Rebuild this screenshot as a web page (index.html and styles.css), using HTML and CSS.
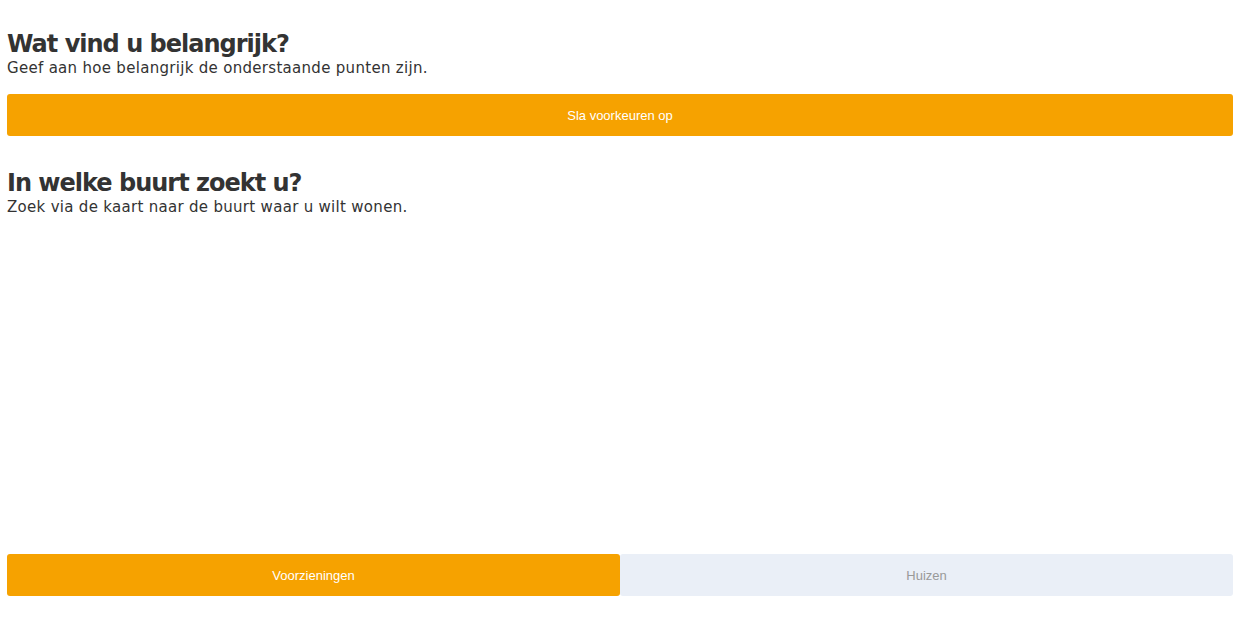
FILE: index.html
```html
<!DOCTYPE html>
<html lang="nl">
<head>
<meta charset="utf-8">
<title>Voorkeuren</title>
<link rel="stylesheet" href="styles.css">
</head>
<body>
<main class="page">
  <section class="block">
    <h1 class="title">Wat vind u belangrijk?</h1>
    <p class="subtitle">Geef aan hoe belangrijk de onderstaande punten zijn.</p>
    <button class="btn btn-primary btn-save">Sla voorkeuren op</button>
  </section>
  <section class="block block-map">
    <h1 class="title">In welke buurt zoekt u?</h1>
    <p class="subtitle">Zoek via de kaart naar de buurt waar u wilt wonen.</p>
    <div class="map"></div>
    <div class="tabs">
      <button class="btn btn-primary tab">Voorzieningen</button>
      <button class="btn btn-muted tab">Huizen</button>
    </div>
  </section>
</main>
</body>
</html>
```
FILE: styles.css
```css
html, body {
  margin: 0;
  padding: 0;
  background: #ffffff;
}
.page {
  padding: 29px 4px 0 7px;
  font-family: "DejaVu Sans", sans-serif;
  color: #333333;
}
.title {
  margin: 0;
  font-size: 24px;
  line-height: 30px;
  font-weight: 700;
  letter-spacing: -1px;
}
.subtitle {
  margin: 0;
  font-size: 15px;
  line-height: 18px;
  letter-spacing: 0.3px;
}
.btn {
  display: block;
  border: 0;
  height: 42px;
  font-family: "Liberation Sans", Arial, sans-serif;
  font-size: 13px;
  cursor: pointer;
}
.btn-primary {
  background: #f6a200;
  color: #ffffff;
}
.btn-muted {
  background: #eaeff7;
  color: #999999;
}
.btn-save {
  width: 100%;
  margin-top: 17px;
  border-radius: 3px;
}
.block-map {
  margin-top: 32px;
}
.map {
  height: 338px;
}
.tabs {
  display: flex;
}
.tab {
  flex: 1 1 0;
  border-radius: 3px;
}
```
